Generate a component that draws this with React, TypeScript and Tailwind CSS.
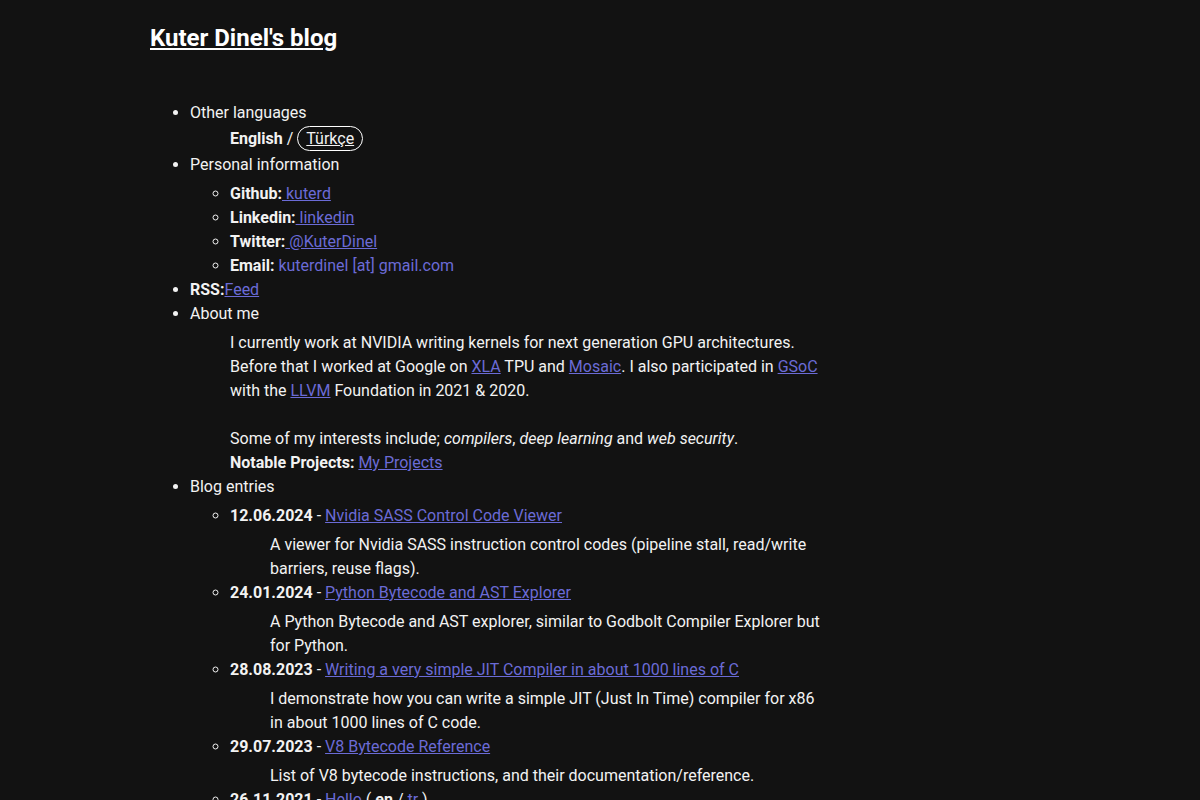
const link = "text-[#6b6bd6] underline";

type Entry = {
  date: string;
  title: string;
  desc?: string;
};

const entries: Entry[] = [
  {
    date: "12.06.2024",
    title: "Nvidia SASS Control Code Viewer",
    desc: "A viewer for Nvidia SASS instruction control codes (pipeline stall, read/write barriers, reuse flags).",
  },
  {
    date: "24.01.2024",
    title: "Python Bytecode and AST Explorer",
    desc: "A Python Bytecode and AST explorer, similar to Godbolt Compiler Explorer but for Python.",
  },
  {
    date: "28.08.2023",
    title: "Writing a very simple JIT Compiler in about 1000 lines of C",
    desc: "I demonstrate how you can write a simple JIT (Just In Time) compiler for x86 in about 1000 lines of C code.",
  },
  {
    date: "29.07.2023",
    title: "V8 Bytecode Reference",
    desc: "List of V8 bytecode instructions, and their documentation/reference.",
  },
];

export default function App() {
  return (
    <div
      className="min-h-screen bg-[#121212] text-[#f2f2f2] text-base leading-6"
      style={{ fontFamily: "Roboto, 'Liberation Sans', sans-serif" }}
    >
      <div className="ml-[150px] max-w-[675px] pt-5">
        {/* Header */}
        <h1 className="text-2xl font-bold leading-9 text-white">
          <a href="#" className="underline">
            Kuter Dinel's blog
          </a>
        </h1>

        <ul className="mt-[45px] list-disc pl-10">
          <li>
            Other languages
            <div className="ml-10 mt-px h-[27px]">
              <b>English</b> /{" "}
              <a
                href="#"
                className="inline-block rounded-full border border-white px-2 leading-[23px] underline"
              >
                Türkçe
              </a>
            </div>
          </li>

          <li>
            Personal information
            <ul className="mt-[5px] list-[circle] pl-10">
              <li>
                <b>Github:</b>
                <a href="#" className={link}>
                  {" kuterd"}
                </a>
              </li>
              <li>
                <b>Linkedin:</b>
                <a href="#" className={link}>
                  {" linkedin"}
                </a>
              </li>
              <li>
                <b>Twitter:</b>
                <a href="#" className={link}>
                  {" @KuterDinel"}
                </a>
              </li>
              <li>
                <b>Email:</b>{" "}
                <span className="text-[#6b6bd6]">kuterdinel [at] gmail.com</span>
              </li>
            </ul>
          </li>

          <li>
            <b>RSS:</b>
            <a href="#" className={link}>
              Feed
            </a>
          </li>

          <li>
            About me
            <div className="ml-10 mt-[5px]">
              <p>
                I currently work at NVIDIA writing kernels for next generation GPU
                architectures. Before that I worked at Google on{" "}
                <a href="#" className={link}>XLA</a> TPU and{" "}
                <a href="#" className={link}>Mosaic</a>. I also participated in{" "}
                <a href="#" className={link}>GSoC</a> with the{" "}
                <a href="#" className={link}>LLVM</a> Foundation in 2021 &amp; 2020.
              </p>
              <br />
              <p>
                Some of my interests include; <i>compilers</i>, <i>deep learning</i> and{" "}
                <i>web security</i>.
              </p>
              <p>
                <b>Notable Projects:</b>{" "}
                <a href="#" className={link}>My Projects</a>
              </p>
            </div>
          </li>

          <li>
            Blog entries
            <ul className="mt-[5px] list-[circle] pl-10">
              {entries.map((e) => (
                <li key={e.date}>
                  <b>{e.date}</b> -{" "}
                  <a href="#" className={link}>
                    {e.title}
                  </a>
                  {e.desc && <div className="ml-10 mt-[5px]">{e.desc}</div>}
                </li>
              ))}
              <li>
                <b>26.11.2021</b> -{" "}
                <a href="#" className={link}>Hello</a> ( <b>en</b> /{" "}
                <a href="#" className={link}>tr</a> )
              </li>
            </ul>
          </li>
        </ul>
        <div className="h-10" />
      </div>
    </div>
  );
}
